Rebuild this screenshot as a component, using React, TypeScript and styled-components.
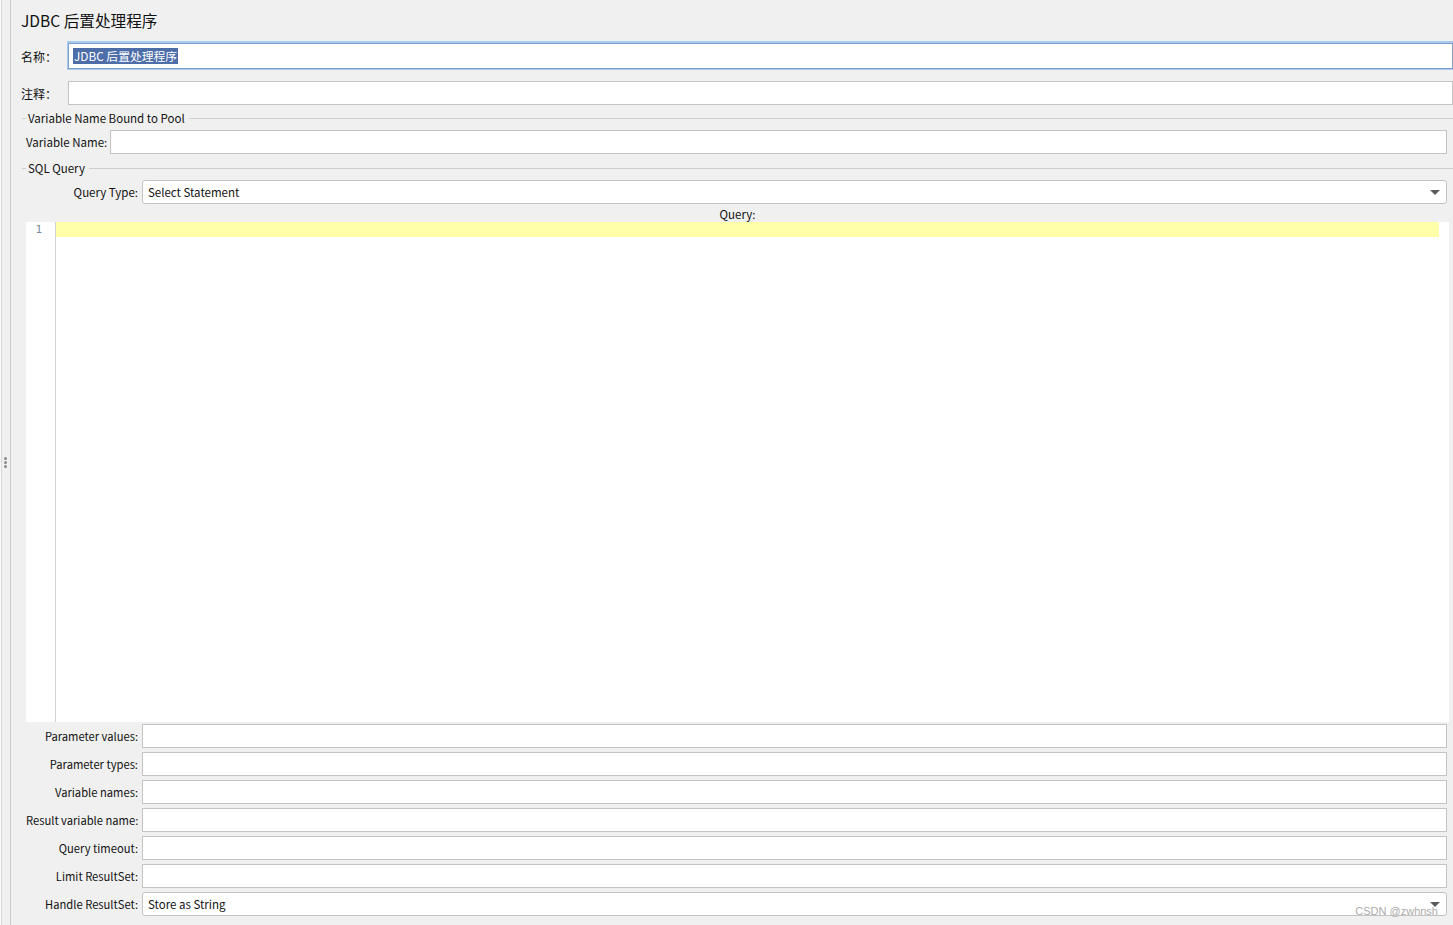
import React from "react";
import styled, { createGlobalStyle } from "styled-components";

const PARAM_ROWS = [
  { label: "Parameter values:", value: "" },
  { label: "Parameter types:", value: "" },
  { label: "Variable names:", value: "" },
  { label: "Result variable name:", value: "" },
  { label: "Query timeout:", value: "" },
  { label: "Limit ResultSet:", value: "" },
];

const App: React.FC = () => {
  return (
    <StyledPage>
      <GlobalStyle />
      <Splitter>
        <Dot />
        <Dot />
        <Dot />
      </Splitter>
      <Main>
        <Title>JDBC 后置处理程序</Title>

        <TopRow>
          <Label $cjk>名称：</Label>
          <Field $focused $height={26}>
            <Selected>JDBC 后置处理程序</Selected>
          </Field>
        </TopRow>
        <TopRow>
          <Label $cjk>注释：</Label>
          <Field $height={24} />
        </TopRow>

        <Group>
          <GroupTitle>
            <Dash />
            <span>Variable Name Bound to Pool</span>
            <Rule />
          </GroupTitle>
          <GroupBody>
            <FormGrid $labelWidth={80} $top={5}>
              <Label>Variable Name:</Label>
              <Field $height={24} />
            </FormGrid>
          </GroupBody>
        </Group>

        <Group $top={7}>
          <GroupTitle>
            <Dash />
            <span>SQL Query</span>
            <Rule />
          </GroupTitle>
          <GroupBody>
            <FormGrid $labelWidth={112} $top={5}>
              <Label $right>Query Type:</Label>
              <Select>
                <span>Select Statement</span>
                <Arrow />
              </Select>
            </FormGrid>
            <QueryLabel>Query:</QueryLabel>
            <Editor>
              <Gutter>
                <LineNo>1</LineNo>
              </Gutter>
              <CodeArea>
                <CurrentLine />
              </CodeArea>
            </Editor>
            <FormGrid $labelWidth={112} $top={2}>
              {PARAM_ROWS.map((row, idx) => (
                <React.Fragment key={idx.toString()}>
                  <Label $right $small>{row.label}</Label>
                  <Field $height={24}>{row.value}</Field>
                </React.Fragment>
              ))}
              <Label $right $small>Handle ResultSet:</Label>
              <Select>
                <span>Store as String</span>
                <Arrow />
              </Select>
            </FormGrid>
          </GroupBody>
        </Group>

        <Watermark>CSDN @zwhnsh</Watermark>
      </Main>
    </StyledPage>
  );
};

const GlobalStyle = createGlobalStyle`
  html, body {
    margin: 0;
    padding: 0;
    height: 100%;
  }
  body {
    font-family: "Noto Sans CJK SC", "Noto Sans", sans-serif;
    font-size: 11.5px;
    color: #111;
    background: #f0f0f0;
  }
  #root {
    height: 100%;
  }
`;

const StyledPage = styled.div`
  display: flex;
  height: 925px;
  overflow: hidden;
  background: #f0f0f0;
`;

const Splitter = styled.div`
  width: 11px;
  box-sizing: border-box;
  border-right: 1px solid #c9c9c9;
  background: linear-gradient(to right, #f8f8f8 0 1px, #dadada 1px 2px, #f0f0f0 2px);
  display: flex;
  flex-direction: column;
  align-items: center;
  justify-content: center;
  gap: 1px;
  padding-left: 1px;
`;

const Dot = styled.div`
  width: 3px;
  height: 3px;
  border-radius: 50%;
  background: #8a8a8a;
`;

const Main = styled.div`
  position: relative;
  flex: 1;
  min-width: 0;
  padding-left: 10px;
  display: flex;
  flex-direction: column;
  overflow: hidden;
`;

const Title = styled.div`
  font-size: 15.6px;
  line-height: 22px;
  padding-top: 9px;
  color: #111;
`;

const TopRow = styled.div`
  display: grid;
  grid-template-columns: 47px 1fr;
  align-items: center;
  margin-top: 12px;
`;

const Label = styled.div<{ $right?: boolean; $cjk?: boolean; $small?: boolean }>`
  white-space: nowrap;
  text-align: ${(p) => (p.$right ? "right" : "left")};
  font-size: ${(p) => (p.$cjk ? "12px" : p.$small ? "11.2px" : "inherit")};
  line-height: 16px;
  padding-top: ${(p) => (p.$cjk ? "2px" : "0")};
`;

const Field = styled.div<{ $height: number; $focused?: boolean }>`
  box-sizing: border-box;
  height: ${(p) => p.$height}px;
  background: #fff;
  border: 1px solid ${(p) => (p.$focused ? "#7c9fc6" : "#c4c4c4")};
  box-shadow: ${(p) => (p.$focused ? "0 0 0 1px #a9caee, 0 -1px 0 1px #a9caee" : "none")};
  display: flex;
  align-items: center;
  padding-left: 4px;
  white-space: nowrap;
  overflow: hidden;
`;

const Selected = styled.span`
  background: #4d6ea8;
  color: #fff;
  font-size: 11.8px;
  line-height: 16px;
  padding: 0 1px;
`;

const Group = styled.div<{ $top?: number }>`
  margin-top: ${(p) => p.$top ?? 6}px;
  margin-left: 1px;
`;

const GroupTitle = styled.div`
  display: flex;
  align-items: center;
  height: 14px;
  line-height: 14px;
  color: #111;

  span {
    margin: 0 4px 0 2px;
    white-space: nowrap;
  }
`;

const Dash = styled.div`
  width: 4px;
  height: 1px;
  background: #cdcdcd;
`;

const Rule = styled.div`
  flex: 1;
  height: 1px;
  background: #cdcdcd;
`;

const GroupBody = styled.div`
  padding: 0 4px;
`;

const FormGrid = styled.div<{ $labelWidth: number; $top: number }>`
  display: grid;
  grid-template-columns: ${(p) => p.$labelWidth}px 1fr;
  column-gap: 4px;
  row-gap: 4px;
  align-items: center;
  margin-top: ${(p) => p.$top}px;
  padding-right: 2px;
`;

const Select = styled.div`
  box-sizing: border-box;
  height: 24px;
  background: #fff;
  border: 1px solid #c4c4c4;
  border-radius: 3px;
  display: flex;
  align-items: center;
  justify-content: space-between;
  padding: 0 6px 0 5px;
`;

const Arrow = styled.div`
  width: 0;
  height: 0;
  border-left: 5px solid transparent;
  border-right: 5px solid transparent;
  border-top: 5px solid #5c5c5c;
`;

const QueryLabel = styled.div`
  height: 18px;
  line-height: 20px;
  text-align: center;
`;

const Editor = styled.div`
  display: flex;
  height: 500px;
  background: #fff;
`;

const Gutter = styled.div`
  box-sizing: border-box;
  width: 30px;
  border-right: 1px solid #d2d2d2;
  text-align: right;
  padding-right: 13px;
`;

const LineNo = styled.div`
  font-family: "DejaVu Sans Mono", monospace;
  font-size: 11px;
  line-height: 15px;
  color: #788aa0;
`;

const CodeArea = styled.div`
  flex: 1;
  padding-right: 10px;
`;

const CurrentLine = styled.div`
  height: 15px;
  background: #ffffaa;
`;

const Watermark = styled.div`
  position: absolute;
  right: 15px;
  bottom: 7px;
  font-family: "Liberation Sans", Arial, sans-serif;
  font-size: 11px;
  color: #ababab;
  line-height: 13px;
`;

export default App;
